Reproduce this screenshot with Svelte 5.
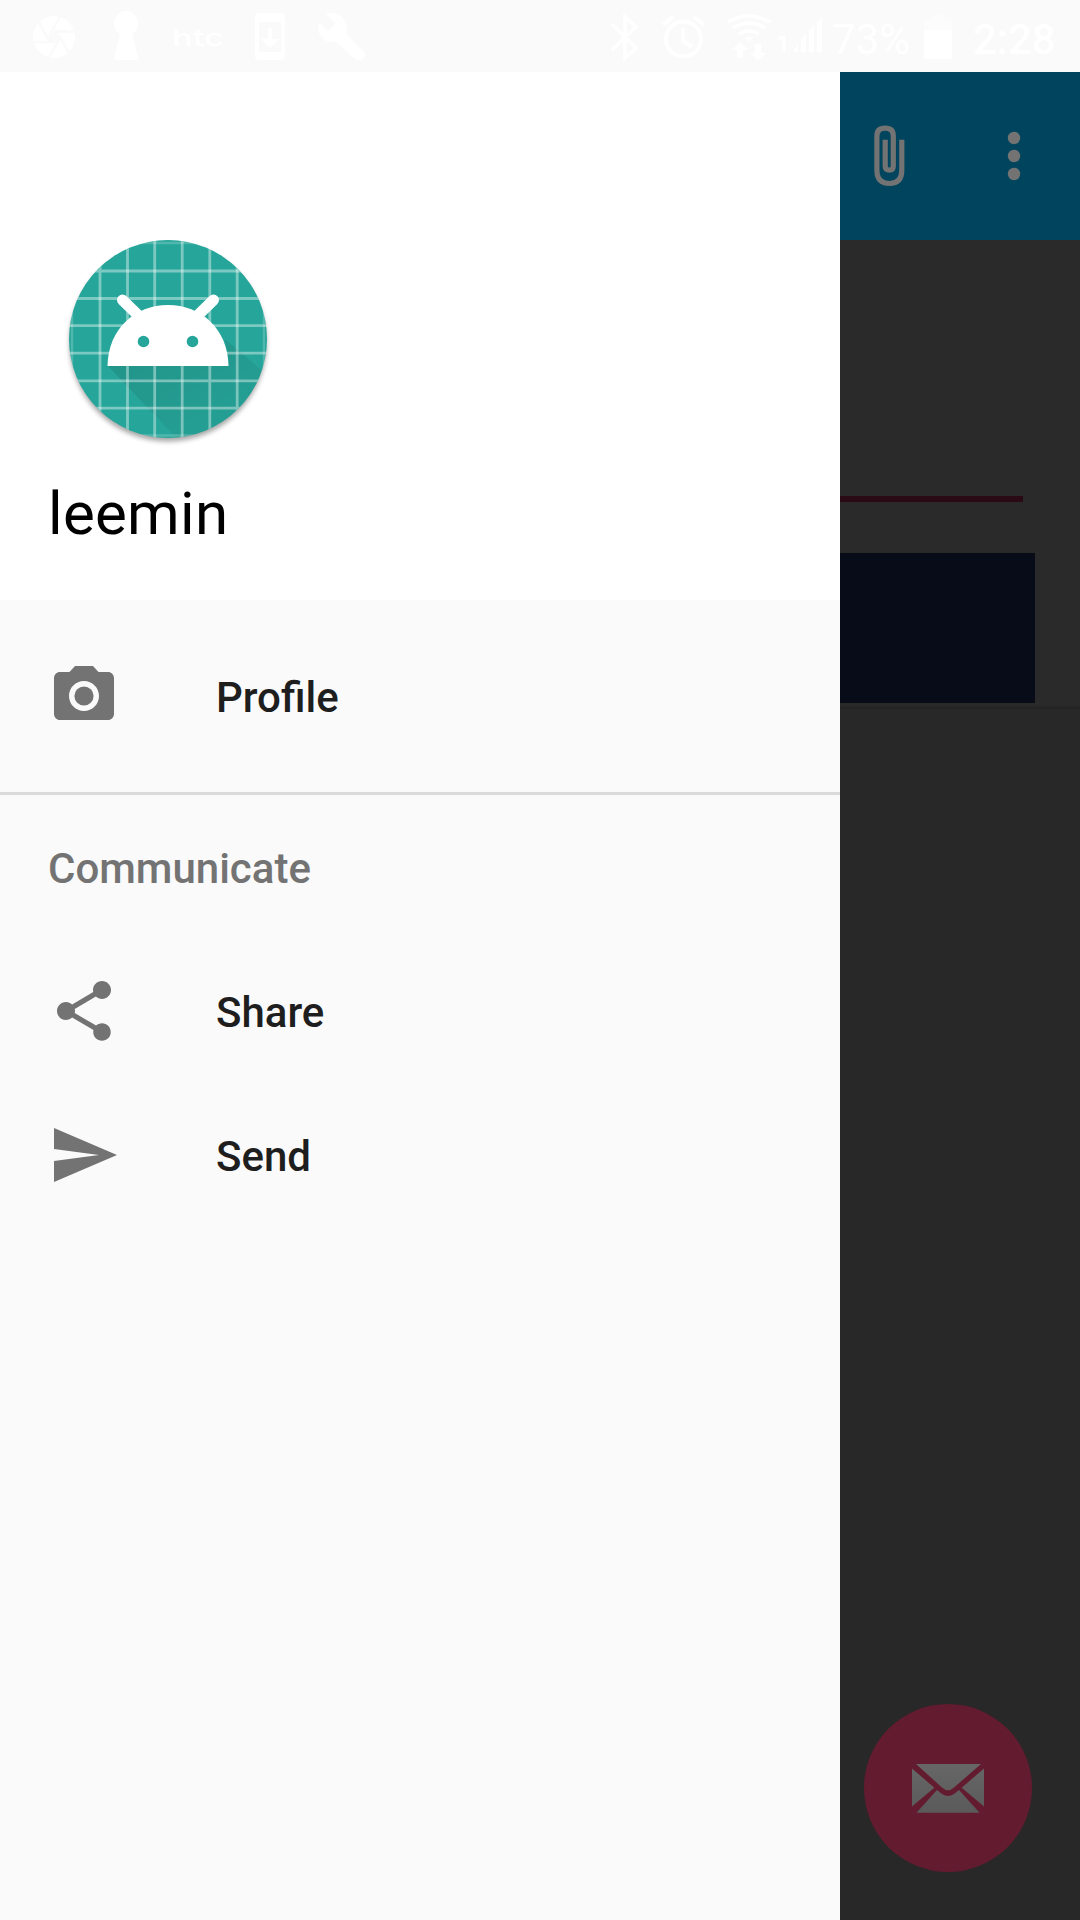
<script>
  const items = [
    { label: 'Share', d: 'M18 16.08c-.76 0-1.44.3-1.96.77L8.91 12.7c.05-.23.09-.46.09-.7s-.04-.47-.09-.7l7.05-4.11c.54.5 1.25.81 2.04.81 1.66 0 3-1.34 3-3s-1.34-3-3-3-3 1.34-3 3c0 .24.04.47.09.7L8.04 9.81C7.5 9.31 6.79 9 6 9c-1.66 0-3 1.34-3 3s1.34 3 3 3c.79 0 1.5-.31 2.04-.81l7.12 4.16c-.05.21-.08.43-.08.65 0 1.61 1.31 2.92 2.92 2.92s2.92-1.31 2.92-2.92-1.31-2.92-2.92-2.92z' },
    { label: 'Send', d: 'M2.01 21L23 12 2.01 3 2 10l15 2-15 2z' }
  ];
  const grid = [-68, -40.5, -13.3, 14.2, 41.8, 69.2];
</script>

<div class="screen">
  <header class="status">
    <svg class="notifications" viewBox="0 0 400 72" fill="#fff">
      <circle cx="54" cy="37" r="21" />
      <path d="M61 15L49 36M76 31.500H54M70 55L59 35M48 59L60 38M32 42H54M37 19L49 41" stroke="#fafafa" stroke-width="2.400" />
      <path d="M54 31l5 3v6l-5 3-5-3v-6z" fill="#fafafa" />
      <path d="M120 34a12.300 12.300 0 1 1 12 0l6.500 26h-25z" />
      <text class="brand" x="172" y="46" textLength="52" lengthAdjust="spacingAndGlyphs">htc</text>
      <path fill-rule="evenodd" d="M259 13h22q4 0 4 4v39q0 4-4 4h-22q-4 0-4-4V17q0-4 4-4zm0 9v30h22V22z" />
      <path d="M268 28h4v11h7l-9 9-9-9h7z" />
      <path d="M326 14l9 9-7 8-9-8c-3 13 6 21 17 19l19 17q4 3 8 0 4-4 1-7L346 34c4-14-8-24-20-20z" />
    </svg>
    <svg class="system" viewBox="590 0 226 72" fill="#fff">
      <path d="M612 24l24 24-11 10V17l11 10-24 23" fill="none" stroke="#fff" stroke-width="3.500" />
      <g fill="none" stroke="#fff" stroke-width="4">
        <circle cx="683.500" cy="39" r="17.500" />
        <path d="M663 25l10-8M704 25l-10-8M683 28v13l9 6" />
      </g>
      <path d="M728 22q21-12 42 0M733 28q16-10 32 0M739 34q10-6 20 0" fill="none" stroke="#fff" stroke-width="3.500" />
      <path d="M744 37h10l-5 4z" />
      <path d="M740 42l8 8h-5v8h-6v-8h-5zM758 60l-8-7h5v-9h6v9h5z" />
      <text class="sim" x="776" y="52">1</text>
      <path d="M793 52v-1l5-6v7zM801 52V40l5-6v18zM809 52V31l5-6v27z" />
    </svg>
    <svg class="last-bar" viewBox="0 0 6 72" fill="#fff"><path d="M1 52V23l5-6v35z" /></svg>
    <span class="percent">73%</span>
    <svg class="battery" viewBox="0 0 30 72"><path d="M8 15h14v4h7v11H1V19h7z" fill="#fcfcfc" /><path d="M1 30h28v29H1z" fill="#fff" /></svg>
    <span class="clock">2:28</span>
  </header>

  <div class="body">
    <nav class="drawer">
      <div class="profile-header">
        <svg class="avatar" viewBox="-104 -108 208 216">
          <defs>
            <clipPath id="disc"><circle r="99" /></clipPath>
            <linearGradient id="shade" x1="0" y1="0" x2="1" y2="1">
              <stop offset="0" stop-color="#000" stop-opacity=".12" />
              <stop offset="1" stop-color="#000" stop-opacity=".01" />
            </linearGradient>
            <filter id="soft" x="-20%" y="-20%" width="140%" height="140%"><feGaussianBlur stdDeviation="2.500" /></filter>
          </defs>
          <circle cy="4" r="98.500" opacity=".35" filter="url(#soft)" />
          <circle r="99" fill="#26a69a" />
          <g clip-path="url(#disc)">
            <path d="M-60 27L16 107H130V62L57 0L61 27z" fill="url(#shade)" />
            {#each grid as g}
              <path d="M{g} -99V99M-99 {g}H99" stroke="#fff" stroke-opacity=".4" stroke-width="2.800" />
            {/each}
            <path d="M-96 -99V99M96 -99V99M-99 -96H99M-99 96.500H99" stroke="#fff" stroke-opacity=".2" stroke-width="2.400" />
          </g>
          <path d="M-60.500 27C-60 -10 -33 -34 0 -34S60 -10 60.500 27z" fill="#fff" />
          <path d="M-45.500 -39L-26 -20M45.500 -39L26 -20" stroke="#fff" stroke-width="11" stroke-linecap="round" />
          <circle cx="-24.500" cy="2.500" r="5.800" fill="#26a69a" />
          <circle cx="24.500" cy="2.500" r="5.800" fill="#26a69a" />
        </svg>
        <div class="name">leemin</div>
      </div>

      <div class="group">
        <div class="item">
          <svg viewBox="0 0 24 24"><circle cx="12" cy="12" r="3.200" /><path d="M9 2L7.170 4H4c-1.100 0-2 .9-2 2v12c0 1.100.9 2 2 2h16c1.100 0 2-.9 2-2V6c0-1.100-.9-2-2-2h-3.170L15 2H9zm3 15c-2.760 0-5-2.240-5-5s2.240-5 5-5 5 2.240 5 5-2.240 5-5 5z" /></svg>
          <span>Profile</span>
        </div>
      </div>
      <div class="subheader">Communicate</div>
      {#each items as item}
        <div class="item">
          <svg viewBox="0 0 24 24"><path d={item.d} /></svg>
          <span>{item.label}</span>
        </div>
      {/each}
    </nav>

    <main class="content">
      <div class="toolbar">
        <svg viewBox="0 0 240 168">
          <path d="M61.800 67.700V98Q61.800 111.500 49.500 111.500Q36.900 111.500 36.900 98V64Q36.900 56.200 45.200 56.200Q53.300 56.200 53.300 64V94Q53.300 98.200 49.500 98.200Q45.200 98.200 45.200 94V67.700" fill="none" stroke="#737373" stroke-width="5.200" />
          <g fill="#737373"><circle cx="174" cy="66" r="6.200" /><circle cx="174" cy="84" r="6.200" /><circle cx="174" cy="102" r="6.200" /></g>
        </svg>
      </div>
      <div class="form">
        <div class="underline"></div>
        <div class="button"></div>
      </div>
      <div class="list"></div>
      <div class="fab">
        <svg viewBox="0 0 72 50">
          <defs><linearGradient id="paper" x1="0" y1="0" x2="0" y2="50" gradientUnits="userSpaceOnUse"><stop offset="0" stop-color="#676767" /><stop offset="1" stop-color="#5a5a5a" /></linearGradient></defs>
          <path d="M4 1H69L42 24.500Q36 30 30 24.500zM0 5.500L22.300 24.700 0 43.500zM72 5.500L49.700 24.700 72 43.500zM25 27L30 31Q36 35 42 31L47 27 67.500 49.700H4.500z" fill="url(#paper)" />
        </svg>
      </div>
    </main>
  </div>
</div>

<style>
  .screen {
    width: 1080px;
    height: 1920px;
    display: flex;
    flex-direction: column;
    overflow: hidden;
    background: #fafafa;
    font-family: Roboto, sans-serif;
  }
  svg { display: block; flex: none; }
  .status {
    height: 72px;
    flex: none;
    display: flex;
    color: #fff;
    font-size: 42px;
    line-height: 79px;
    white-space: nowrap;
  }
  .notifications { width: 400px; height: 72px; margin-right: 190px; }
  .brand { font: 500 23px/1 Inter, sans-serif; }
  .system { width: 226px; height: 72px; }
  .sim { font: 700 24px/1 Roboto, sans-serif; }
  .last-bar { width: 6px; height: 72px; margin-right: 10px; }
  .percent { width: 91px; }
  .battery { width: 30px; height: 72px; }
  .clock { margin-left: 20px; font-weight: 500; }
  .body { flex: 1; display: flex; min-height: 0; }
  .drawer { width: 840px; flex: none; background: #fafafa; }
  .profile-header {
    height: 528px;
    box-sizing: border-box;
    background: #fff;
    padding: 159px 48px 0 64px;
  }
  .avatar { width: 208px; height: 216px; }
  .name {
    margin: 32px 0 0 -16px;
    font-size: 60px;
    line-height: 70px;
    letter-spacing: .3px;
    color: #000;
  }
  .group { padding: 24px 0; border-bottom: 3px solid #dadada; }
  .item {
    height: 144px;
    display: flex;
    align-items: center;
    gap: 96px;
    padding-left: 48px;
    font-size: 42px;
    font-weight: 500;
    line-height: 50px;
    color: #1e1e1e;
  }
  .item svg { width: 72px; height: 72px; fill: #737373; }
  .item span { padding-top: 3px; }
  .subheader {
    height: 144px;
    box-sizing: border-box;
    padding: 2px 0 0 48px;
    font-size: 42px;
    font-weight: 500;
    line-height: 144px;
    color: #737373;
  }
  .content {
    width: 240px;
    flex: none;
    display: flex;
    flex-direction: column;
    background: #282828;
  }
  .toolbar { height: 168px; flex: none; background: #00455d; }
  .toolbar svg { width: 240px; height: 168px; }
  .form {
    height: 466px;
    box-sizing: border-box;
    padding-top: 256px;
    background: #2a2a2a;
  }
  .underline { width: 183px; height: 6px; background: #2a0a14; }
  .button { width: 195px; height: 150px; margin-top: 51px; background: #080c18; }
  .list { flex: 1; border-top: 3px solid #242424; }
  .fab {
    width: 168px;
    height: 168px;
    flex: none;
    margin: 0 0 48px 24px;
    border-radius: 50%;
    display: flex;
    align-items: center;
    justify-content: center;
    background: #631b30;
  }
  .fab svg { width: 72px; height: 50px; }
</style>
